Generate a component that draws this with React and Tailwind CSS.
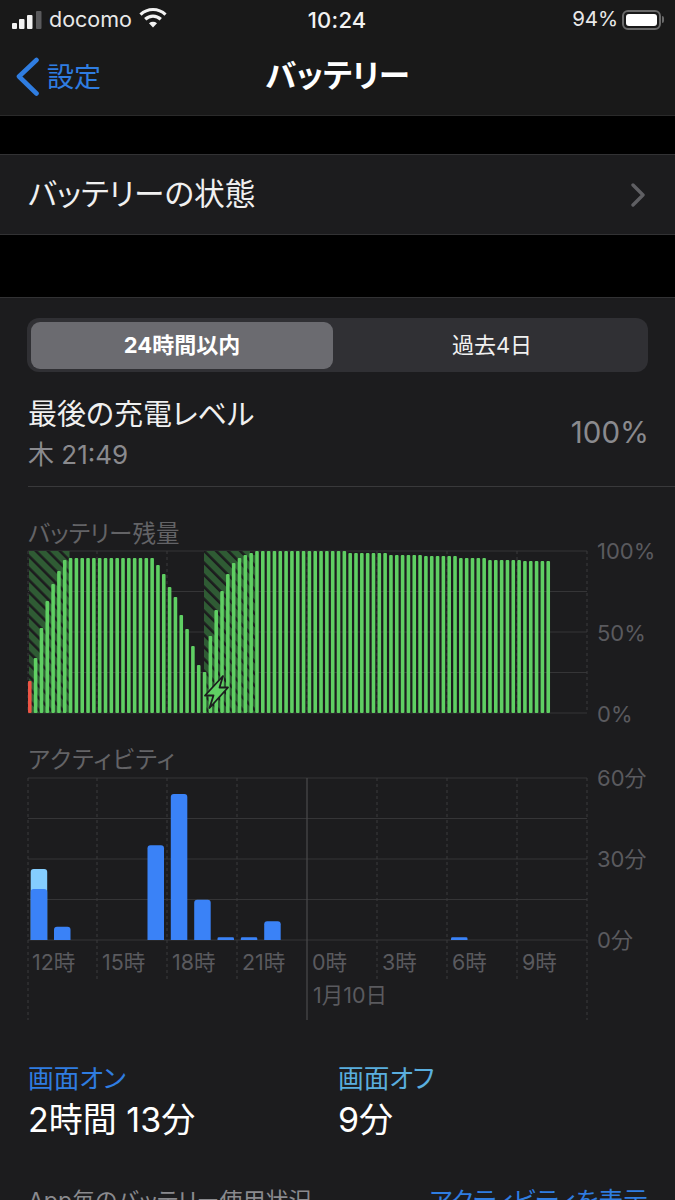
const FONT = "font-['Inter','Noto_Sans_CJK_JP',sans-serif] [font-feature-settings:'palt']";

function heightOf(i) {
  const head = [32, 55, 85, 112, 129, 142, 153];
  const tail = [148, 139, 126, 116, 98, 84, 67, 48, 41, 77, 103, 122, 139, 150, 155, 158, 160];
  if (i < 7) return head[i];
  if (i < 22) return 155;
  if (i < 39) return tail[i - 22];
  if (i < 55) return 162;
  if (i < 62) return 160;
  if (i < 68) return 158;
  if (i < 74) return 157;
  if (i < 79) return 155;
  if (i < 85) return 153;
  return 152;
}

const VX = [28, 97, 167, 237, 307, 377, 447, 517, 587];

function BatteryPlot() {
  const gy = [551, 591.5, 632, 672.5, 713];
  return (
    <svg width="560" height="163" viewBox="28 551 560 163" className="block shrink-0 overflow-visible">
      <defs>
        <pattern id="hatch" width="8.5" height="8.5" patternUnits="userSpaceOnUse" patternTransform="rotate(-45)">
          <rect width="8.5" height="8.5" fill="#2f5b34" />
          <rect width="2.6" height="8.5" fill="#1c1c1e" />
        </pattern>
      </defs>
      {gy.map((y) => (
        <line key={y} x1="28" x2="587" y1={y} y2={y} stroke="#353537" strokeWidth="1.2" />
      ))}
      {VX.map((x) => (
        <line key={x} x1={x} x2={x} y1="551" y2="713" stroke="#3a3a3c" strokeDasharray="3 3" />
      ))}
      <rect x="29" y="551" width="40.5" height="162" fill="url(#hatch)" />
      <rect x="204" y="551" width="36" height="162" fill="url(#hatch)" />
      <path d="M240 551H250V555H255V713H240Z" fill="url(#hatch)" />
      {Array.from({ length: 90 }, (_, i) => {
        const h = heightOf(i);
        return (
          <rect
            key={i}
            x={28 + 5.825 * i}
            y={713 - h}
            width="3.6"
            height={h}
            rx="1"
            fill={i === 0 ? "#ec5545" : "#5fcf63"}
          />
        );
      })}
      <path
        d="M223 676L205 695.5H213.5L209.5 708L228 687.5H219.5Z"
        fill="#5fcf63"
        stroke="#1c1c1e"
        strokeWidth="1.8"
        strokeLinejoin="round"
      />
    </svg>
  );
}

function ActivityPlot() {
  const gy = [778, 818.5, 859, 899.5, 940];
  const bars = [
    [30.7, 869],
    [54, 926.7],
    [147.5, 845.3],
    [170.8, 794],
    [194.2, 899.7],
    [217.5, 937.3],
    [240.8, 937.3],
    [264.2, 921.3],
    [451, 937.3],
  ];
  return (
    <svg width="560" height="242" viewBox="28 778 560 242" className="block overflow-visible">
      {gy.map((y) => (
        <line key={y} x1="28" x2="587" y1={y} y2={y} stroke="#353537" strokeWidth="1.2" />
      ))}
      {VX.map((x) =>
        x === 307 ? (
          <line key={x} x1={x} x2={x} y1="778" y2="1020" stroke="#4a4a4c" strokeWidth="1.2" />
        ) : (
          <line
            key={x}
            x1={x}
            x2={x}
            y1="778"
            y2={x === 28 || x === 587 ? 1020 : 980}
            stroke="#3a3a3c"
            strokeDasharray="3 3"
          />
        )
      )}
      {bars.map(([x, y]) => {
        const r = Math.min(3, (940 - y) / 2);
        const w = 16.5;
        const d = `M${x} 940V${y + r}Q${x} ${y} ${x + r} ${y}H${x + w - r}Q${x + w} ${y} ${x + w} ${y + r}V940Z`;
        return <path key={x} d={d} fill={x === 30.7 ? "#84cdfe" : "#3a82f7"} />;
      })}
      <path d="M30.7 940V892Q30.7 889 33.7 889H44.2Q47.2 889 47.2 892V940Z" fill="#3a82f7" />
    </svg>
  );
}

function StatusBar() {
  return (
    <div className="flex h-[38px] items-center pl-[12px] pr-[11px] pt-[1px] text-white">
      <svg width="30" height="20" viewBox="0 0 30 20" className="shrink-0">
        <rect x="0" y="13" width="5" height="6" rx="1" fill="#f2f2f2" />
        <rect x="7" y="9" width="5.5" height="10" rx="1" fill="#f2f2f2" />
        <rect x="15" y="5" width="5.5" height="14" rx="1" fill="#f2f2f2" />
        <rect x="24" y="1" width="5.5" height="18" rx="1" fill="#5a5a5c" />
      </svg>
      <span className="ml-[7px] w-[90px] text-[21.5px] leading-none text-[#e8e8e8]">docomo</span>
      <svg width="28" height="21" viewBox="0 0 28 21" className="shrink-0 -translate-y-[2px]" fill="none" stroke="#f2f2f2" strokeWidth="3.2">
        <path d="M1.5 7.6C8.6 .8 19.4 .8 26.5 7.6" />
        <path d="M6.2 12.2C10.8 8 17.2 8 21.8 12.2" />
        <path d="M14 20.5L10 16.2C12.4 14.4 15.6 14.4 18 16.2Z" fill="#f2f2f2" stroke="none" />
      </svg>
      <span className="ml-[141px] w-[265px] text-[22px] font-medium leading-none tracking-[0.2px] text-[#f2f2f2]">10:24</span>
      <span className="w-[50px] text-[20.5px] leading-none text-[#e8e8e8]">94%</span>
      <span className="flex items-center">
        <span className="flex h-[20px] w-[39px] items-center rounded-[6px] border-2 border-[#6a6a6a] p-[2px]">
          <span className="h-full w-full rounded-[3px] bg-white" />
        </span>
        <span className="ml-[1px] h-[7px] w-[2px] rounded-r-sm bg-[#6a6a6a]" />
      </span>
    </div>
  );
}

export default function App() {
  const times = ["12時", "15時", "18時", "21時", "0時", "3時", "6時", "9時"];
  return (
    <div className={`flex h-[1200px] w-[675px] flex-col overflow-hidden bg-black ${FONT}`}>
      <header className="h-[116px] shrink-0 border-b border-[#2a2a2a] bg-[#191919]">
        <StatusBar />
        <div className="relative flex h-[77px] items-center justify-center">
          <div className="absolute left-[16px] top-[19px] flex items-center">
            <svg width="24" height="40" viewBox="0 0 24 40" fill="none" stroke="#2f7de1" strokeWidth="4.6" strokeLinecap="round" strokeLinejoin="round">
              <path d="M20.5 3L3 19.5L20.5 36.5" />
            </svg>
            <span className="ml-[7px] text-[27px] leading-none text-[#2f7de1]">設定</span>
          </div>
          <h1 className="-translate-y-[1px] text-[31.5px] font-bold leading-none text-white">バッテリー</h1>
        </div>
      </header>

      <div className="h-[38px] shrink-0" />

      <div className="flex h-[81px] shrink-0 items-center justify-between border-y border-[#323234] bg-[#1c1c1e] pl-[28px] pr-[30px]">
        <span className="text-[30.7px] leading-none text-[#f0f0f0]">バッテリーの状態</span>
        <svg width="14" height="24" viewBox="0 0 14 24" fill="none" stroke="#5f5f63" strokeWidth="3.4" strokeLinecap="round" strokeLinejoin="round">
          <path d="M2 2L12 12L2 22" />
        </svg>
      </div>

      <div className="h-[62px] shrink-0" />

      <main className="flex-1 border-t border-[#323234] bg-[#1c1c1e]">
        <div className="ml-[27px] mr-[27px] mt-[20px] flex h-[54px] items-center rounded-[12px] bg-[#303034] p-[4px]">
          <div className="flex h-[47px] w-[302px] items-center justify-center rounded-[9px] bg-[#6b6b70] text-[22px] font-bold leading-none text-white">
            24時間以内
          </div>
          <div className="flex h-[47px] flex-1 items-center justify-center pl-[7px] text-[22px] leading-none text-[#f0f0f0]">
            過去4日
          </div>
        </div>

        <div className="mt-[25px] flex items-center justify-between pl-[28px] pr-[26px]">
          <div>
            <div className="flex h-[34px] items-center text-[29px] leading-none text-[#f0f0f0]">最後の充電レベル</div>
            <div className="mt-[7px] flex h-[34px] items-center text-[26px] leading-none text-[#8a8a8e]">木 21:49</div>
          </div>
          <div className="-translate-y-[2px] text-[29.5px] leading-none text-[#8a8a8e]">100%</div>
        </div>

        <div className="ml-[28px] mt-[14px] h-px bg-[#39393b]" />

        <div className="ml-[28px] mt-[32px] flex h-[30px] items-center text-[23.5px] leading-none text-[#636366]">バッテリー残量</div>
        <div className="mt-[2px] flex pl-[28px]">
          <BatteryPlot />
          <div className="-my-3 ml-[9px] flex flex-col justify-between text-[22px] leading-[24px] text-[#5a5a5e]">
            <span>100%</span>
            <span>50%</span>
            <span>0%</span>
          </div>
        </div>

        <div className="ml-[28px] mt-[31px] flex h-[30px] items-center text-[23.5px] leading-none tracking-[1.2px] text-[#636366]">アクティビティ</div>
        <div className="relative mt-[3px] flex pl-[28px]">
          <ActivityPlot />
          <div className="-mt-3 ml-[9px] flex h-[186px] flex-col justify-between text-[22px] leading-[24px] text-[#5a5a5e]">
            <span>60分</span>
            <span>30分</span>
            <span>0分</span>
          </div>
          <div className="absolute left-[28px] top-[172px] grid w-[560px] grid-cols-8 text-[21.5px] leading-[24px] text-[#5a5a5e]">
            {times.map((t) => (
              <span key={t} className="pl-[4px]">{t}</span>
            ))}
            <span className="col-span-4" />
            <span className="col-span-4 mt-[9px] pl-[5px]">1月10日</span>
          </div>
        </div>

        <div className="mt-[43px] flex pl-[28px]">
          <div className="w-[310px]">
            <div className="flex h-[32px] items-center text-[25.7px] leading-none text-[#2f7de1]">画面オン</div>
            <div className="mt-[5px] flex h-[40px] items-center text-[34px] leading-none text-white">2時間 13分</div>
          </div>
          <div>
            <div className="flex h-[32px] items-center text-[25.7px] leading-none text-[#5aaede]">画面オフ</div>
            <div className="mt-[5px] flex h-[40px] items-center text-[34px] leading-none text-white">9分</div>
          </div>
        </div>

        <div className="mt-[45px] flex h-[32px] items-center justify-between pl-[28px] pr-[27px] leading-none">
          <span className="text-[23px] text-[#8a8a8e]">App毎のバッテリー使用状況</span>
          <span className="text-[24.7px] text-[#2f7de1]">アクティビティを表示</span>
        </div>
      </main>
    </div>
  );
}
